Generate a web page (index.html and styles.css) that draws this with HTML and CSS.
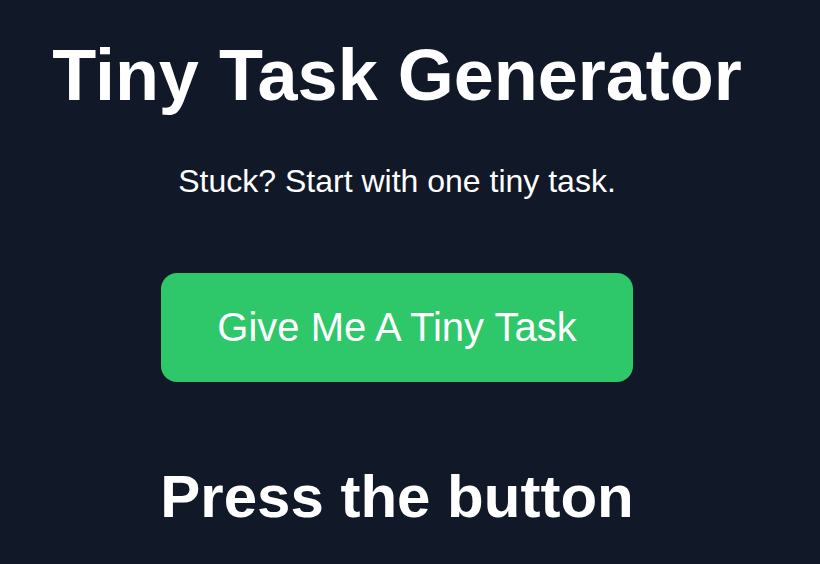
FILE: index.html
```html
<!DOCTYPE html>
<html lang="en">
<head>
<meta charset="utf-8">
<title>Tiny Task Generator</title>
<link rel="stylesheet" href="styles.css">
</head>
<body>
<main class="app">
  <h1 class="title">Tiny Task Generator</h1>
  <p class="subtitle">Stuck? Start with one tiny task.</p>
  <button class="task-btn" type="button">Give Me A Tiny Task</button>
  <h2 class="task">Press the button</h2>
</main>
</body>
</html>
```

FILE: styles.css
```css
html, body {
  margin: 0;
  padding: 0;
  background: #111827;
}

body {
  font-family: "Liberation Sans", Arial, sans-serif;
  color: #ffffff;
}

.app {
  display: flex;
  flex-direction: column;
  align-items: center;
  text-align: center;
  width: 794px;
  padding-top: 34px;
}

.title {
  margin: 0;
  font-size: 72px;
  font-weight: 700;
  line-height: normal;
}

.subtitle {
  margin: 47px 0 0;
  font-size: 32px;
  line-height: normal;
}

.task-btn {
  margin-top: 73px;
  width: 472px;
  height: 109px;
  padding: 0;
  border: none;
  border-radius: 16px;
  background: #2ec769;
  color: #ffffff;
  font-family: "Liberation Sans", Arial, sans-serif;
  font-size: 40px;
  cursor: pointer;
}

.task {
  margin: 80px 0 0;
  font-size: 60px;
  font-weight: 700;
  line-height: normal;
}
```
